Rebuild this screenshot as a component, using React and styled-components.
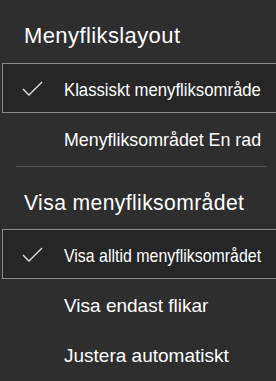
import { useLayoutEffect, useRef, useState } from "react";
import styled, { createGlobalStyle } from "styled-components";

const GlobalStyle = createGlobalStyle`
  html, body {
    margin: 0;
    padding: 0;
    background: #2e2e2e;
    overflow: hidden;
  }
`;

const Menu = styled.div`
  width: 276px;
  height: 381px;
  overflow: hidden;
  background: #2e2e2e;
  color: #ffffff;
  font-family: "Liberation Sans", Arial, sans-serif;
`;

const SectionTitle = styled.div`
  padding: ${(p) => p.$top}px 0 ${(p) => p.$bottom}px 24px;
  font-size: 22px;
  line-height: 24px;
  letter-spacing: 0.4px;
  color: #ffffff;
  white-space: nowrap;
`;

const Option = styled.div`
  display: flex;
  align-items: center;
  box-sizing: border-box;
  height: 50px;
  margin: 0 -6px 0 2px;
  padding-top: 3px;
  border: 1px solid ${(p) => (p.$selected ? "#8c8c8c" : "transparent")};
  background: ${(p) => (p.$selected ? "#262626" : "transparent")};
  font-size: 19px;
  color: #ffffff;
  white-space: nowrap;
`;

const CheckSlot = styled.span`
  flex: none;
  width: 61px;
  display: flex;
  justify-content: center;
  padding: 0 3px 3px 0;
  box-sizing: border-box;
`;

const Label = styled.span`
  display: inline-block;
  white-space: nowrap;
  transform-origin: left center;
`;

const Divider = styled.div`
  height: 1px;
  margin: 3px 10px 0 16px;
  background: #575757;
`;

// long labels are squeezed horizontally so they fit the menu width
const FitText = ({ max, children }) => {
  const ref = useRef(null);
  const [scale, setScale] = useState(1);

  useLayoutEffect(() => {
    const w = ref.current.scrollWidth;
    setScale(Math.min(1, max / w));
  }, [max, children]);

  return (
    <Label ref={ref} style={{ transform: `scaleX(${scale})` }}>
      {children}
    </Label>
  );
};

const Check = () => (
  <svg width="21" height="15" viewBox="0 0 21 15">
    <polyline
      points="1,8 7,14 20,1"
      fill="none"
      stroke="#e0e0e0"
      strokeWidth="1.4"
    />
  </svg>
);

const Item = ({ selected, children }) => (
  <Option $selected={selected}>
    <CheckSlot>{selected && <Check />}</CheckSlot>
    <FitText max={197}>{children}</FitText>
  </Option>
);

export default function App() {
  return (
    <>
      <GlobalStyle />
      <Menu>
        <SectionTitle $top={24} $bottom={15}>
          <FitText max={220}>Menyflikslayout</FitText>
        </SectionTitle>
        <Item selected>Klassiskt menyfliksområde</Item>
        <Item>Menyfliksområdet En rad</Item>
        <Divider />
        <SectionTitle $top={24} $bottom={14}>
          <FitText max={220}>Visa menyfliksområdet</FitText>
        </SectionTitle>
        <Item selected>Visa alltid menyfliksområdet</Item>
        <Item>Visa endast flikar</Item>
        <Item>Justera automatiskt</Item>
      </Menu>
    </>
  );
}
